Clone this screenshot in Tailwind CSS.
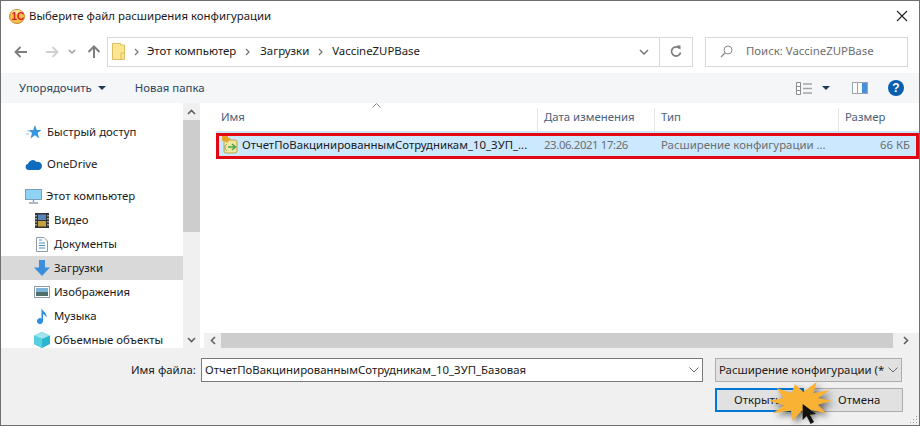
<!DOCTYPE html>
<html lang="ru">
<head>
<meta charset="utf-8">
<script src="https://cdn.jsdelivr.net/npm/@tailwindcss/browser@4"></script>
</head>
<body class="m-0 bg-white">
<div class="relative w-[920px] h-[426px] overflow-hidden flex flex-col border border-[#6f6f6f] bg-white text-[11.4px] text-[#1a1a1a] font-['Noto_Sans',sans-serif] leading-4">

  <!-- title bar -->
  <div class="h-[30px] shrink-0 flex items-center pl-[8px] pr-[11px]">
    <svg width="16" height="15" viewBox="0 0 16 15" class="shrink-0"><ellipse cx="8" cy="7.500" rx="7.500" ry="7" fill="#f5c04a" stroke="#c8862a"/><path d="M2 5A6 4 0 0 1 14 5Z" fill="#fbe3a0"/><text x="2.400" y="11.300" font-size="10" font-weight="700" fill="#d6201f" font-family="Liberation Sans">1С</text></svg>
    <span class="ml-[4px]">Выберите файл расширения конфигурации</span>
    <svg width="12" height="12" viewBox="0 0 12 12" class="ml-auto mt-[-1px]"><path d="M1 1L11 11M11 1L1 11" stroke="#222" stroke-width="1.100" fill="none"/></svg>
  </div>

  <!-- nav row -->
  <div class="h-[42px] shrink-0 flex items-center pb-[1px]">
    <div class="w-[106px] shrink-0 relative h-full flex items-center pl-[13px]">
      <svg width="14" height="12" viewBox="0 0 14 12"><path d="M13 6H2M6.500 1L1.500 6L6.500 11" stroke="#7d7d7d" stroke-width="1.800" fill="none"/></svg>
      <svg width="14" height="12" viewBox="0 0 14 12" class="ml-[17px]"><path d="M1 6H12M7.500 1L12.500 6L7.500 11" stroke="#cfcfcf" stroke-width="1.800" fill="none"/></svg>
      <svg width="8" height="6" viewBox="0 0 8 6" class="ml-[9px]"><path d="M1 1L4 4L7 1" stroke="#9a9a9a" stroke-width="1.500" fill="none"/></svg>
      <svg width="14" height="14" viewBox="0 0 14 14" class="ml-[11px]"><path d="M7 13V2M1.500 7L7 1.500L12.500 7" stroke="#7d7d7d" stroke-width="2" fill="none"/></svg>
    </div>
    <div class="w-[586px] h-[30px] shrink-0 border border-[#d9d9d9] flex items-center">
      <svg width="13" height="17" viewBox="0 0 13 17" class="ml-[4px]"><path d="M.5.5H8.500V2H12.500V16.500H.5Z" fill="#fde68f" stroke="#d9be62"/><path d="M9 16V10H12.500" stroke="#d9be62" fill="none"/></svg>
      <svg width="5" height="8" viewBox="0 0 5 8" class="ml-[9px]"><path d="M1 1L4 4L1 7" stroke="#777" stroke-width="1.300" fill="none"/></svg>
      <span class="ml-[8px] mt-[-1px]">Этот компьютер</span>
      <svg width="5" height="8" viewBox="0 0 5 8" class="ml-[9px]"><path d="M1 1L4 4L1 7" stroke="#777" stroke-width="1.300" fill="none"/></svg>
      <span class="ml-[10px] mt-[-1px]">Загрузки</span>
      <svg width="5" height="8" viewBox="0 0 5 8" class="ml-[9px]"><path d="M1 1L4 4L1 7" stroke="#777" stroke-width="1.300" fill="none"/></svg>
      <span class="ml-[9px] mt-[-1px]">VaccineZUPBase</span>
      <svg width="10" height="6" viewBox="0 0 10 6" class="ml-auto mr-[10px]"><path d="M1 1L5 5L9 1" stroke="#777" stroke-width="1.500" fill="none"/></svg>
      <div class="w-[33px] h-full border-l border-[#d9d9d9] flex items-center justify-center">
        <svg width="12" height="13" viewBox="0 0 12 13"><path d="M9.700 3.500A4.600 4.600 0 1 0 10.600 7.500" stroke="#7d7d7d" stroke-width="1.700" fill="none"/><path d="M6.500 .5H10.500V4.500Z" fill="#7d7d7d"/></svg>
      </div>
    </div>
    <div class="w-[203px] h-[30px] shrink-0 ml-[12px] border border-[#d9d9d9] flex items-center pl-[14px] text-[#6d6d6d]">
      <svg width="13" height="13" viewBox="0 0 13 13"><circle cx="8" cy="5" r="4" stroke="#8a8a8a" fill="none"/><path d="M5 8L1 12" stroke="#8a8a8a" stroke-width="1.200"/></svg>
      <span class="ml-[13px] mt-[-1px]">Поиск: VaccineZUPBase</span>
    </div>
  </div>

  <!-- toolbar -->
  <div class="h-[30px] shrink-0 bg-[#f5f6f7] flex items-center text-[#2f4560] pl-[18px]">
    <span>Упорядочить</span>
    <svg width="8" height="4" viewBox="0 0 8 4" class="ml-[6px]"><path d="M0 0H8L4 4Z" fill="#1e395b"/></svg>
    <span class="ml-[29px]">Новая папка</span>
    <svg width="17" height="13" viewBox="0 0 17 13" class="ml-auto"><path d="M.5.5H4.500V12.500H.5ZM.5 4.500H4.500M.5 8.500H4.500" stroke="#8a8a8a" fill="#fff"/><path d="M7 2H16M7 6.500H16M7 11H16" stroke="#a5a5a5" stroke-width="1.300"/></svg>
    <svg width="8" height="4" viewBox="0 0 8 4" class="ml-[9px]"><path d="M0 0H8L4 4Z" fill="#1e395b"/></svg>
    <svg width="16" height="12" viewBox="0 0 16 12" class="ml-[22px]"><rect x=".5" y=".5" width="15" height="11" fill="#fff" stroke="#9aa5b1"/><rect x="10" y="1" width="5" height="10" fill="#4a90d9"/><path d="M5.500 1V11" stroke="#9aa5b1"/></svg>
    <div class="ml-[20px] mr-[15px] w-[16px] h-[16px] rounded-full bg-[#0a5eb0] text-white text-[12px] font-bold flex items-center justify-center font-['Liberation_Sans',sans-serif]">?</div>
  </div>

  <!-- main -->
  <div class="h-[245px] shrink-0 flex">
    <!-- sidebar -->
    <div class="w-[182px] shrink-0 pt-[17px] overflow-hidden">
      <div class="h-6 flex items-center pl-[25px]">
        <svg width="16" height="16" viewBox="0 0 16 16"><path d="M9 1L10.800 6H15.500L11.700 9L13.200 14.500L9 11.300L4.500 14.500L6 9L2.500 6H7.200Z" fill="#3a96dd"/><path d="M1 7H4M0 10H3" stroke="#8fc3ee"/></svg>
        <span class="ml-[5px]">Быстрый доступ</span>
      </div>
      <div class="h-6 mt-2 flex items-center pl-[24px]">
        <svg width="17" height="11" viewBox="0 0 17 11"><path d="M3.500 11A3.200 3.200 0 0 1 3 4.700 4.800 4.800 0 0 1 11.500 3 3.600 3.600 0 0 1 14 11Z" fill="#0f6cbd"/></svg>
        <span class="ml-[5px]">OneDrive</span>
      </div>
      <div class="h-6 mt-2 flex items-center pl-[24px]">
        <svg width="17" height="15" viewBox="0 0 17 15"><rect x=".5" y=".5" width="16" height="10" fill="#8fd3f4" stroke="#7f9db3"/><path d="M8.500 11V13M4 14H13" stroke="#90a4b4" stroke-width="1.500"/></svg>
        <span class="ml-[4px]">Этот компьютер</span>
      </div>
      <div class="h-6 flex items-center pl-[34px]">
        <svg width="14" height="15" viewBox="0 0 14 15"><rect width="14" height="15" fill="#333"/><rect x="3" y="1.500" width="8" height="5.500" fill="#5a83b8"/><rect x="3" y="8" width="8" height="5.500" fill="#c2a13f"/><path d="M1 2V13M13 2V13" stroke="#ddd" stroke-dasharray="1.500 1.500" stroke-width="1.200"/></svg>
        <span class="ml-[5px]">Видео</span>
      </div>
      <div class="h-6 flex items-center pl-[35px]">
        <svg width="12" height="15" viewBox="0 0 12 15"><path d="M.5.5H8L11.500 4V14.500H.5Z" fill="#fff" stroke="#8f9aa5"/><path d="M3 6H9M3 8.500H9M3 11H9M3 3H6" stroke="#4a90c4"/></svg>
        <span class="ml-[6px]">Документы</span>
      </div>
      <div class="h-6 flex items-center pl-[33px] bg-[#d9d9d9]">
        <svg width="16" height="16" viewBox="0 0 16 16"><path d="M5 0H11V7.500H16L8 16L0 7.500H5Z" fill="#3a8fdc"/></svg>
        <span class="ml-[4px]">Загрузки</span>
      </div>
      <div class="h-6 flex items-center pl-[33px]">
        <svg width="16" height="12" viewBox="0 0 16 12"><rect x=".5" y=".5" width="15" height="11" fill="#fff" stroke="#8f9aa5"/><rect x="2" y="2" width="12" height="4" fill="#7fb3d5"/><rect x="2" y="6" width="12" height="4" fill="#4f6f6a"/></svg>
        <span class="ml-[4px]">Изображения</span>
      </div>
      <div class="h-6 flex items-center pl-[36px]">
        <svg width="11" height="16" viewBox="0 0 11 16"><path d="M4.500 0C5 3 10.500 5 9.500 9.500C9 7.500 7 6.500 6 6.200V13A3 3 0 1 1 4.500 10.500Z" fill="#2d8fdd"/></svg>
        <span class="ml-[6px]">Музыка</span>
      </div>
      <div class="h-6 flex items-center pl-[33px]">
        <svg width="16" height="16" viewBox="0 0 16 16"><path d="M8 0L16 3.500V12L8 16L0 12V3.500Z" fill="#27b5cf"/><path d="M8 7L16 3.500L8 0L0 3.500Z" fill="#9fe4ec"/><path d="M8 7V16L0 12V3.500Z" fill="#57cfdf"/></svg>
        <span class="ml-[4px]">Объемные объекты</span>
      </div>
    </div>
    <!-- sidebar scrollbar -->
    <div class="w-[17px] shrink-0 bg-[#f0f0f0] flex flex-col items-center">
      <div class="h-[17px] w-full flex items-center justify-center"><svg width="9" height="6" viewBox="0 0 9 6"><path d="M1 5L4.500 1.500L8 5" stroke="#606060" stroke-width="1.600" fill="none"/></svg></div>
      <div class="h-[112px] w-full bg-[#cdcdcd]"></div>
      <div class="mt-auto h-[17px] w-full flex items-center justify-center"><svg width="9" height="6" viewBox="0 0 9 6"><path d="M1 1L4.500 4.500L8 1" stroke="#606060" stroke-width="1.600" fill="none"/></svg></div>
    </div>
    <div class="w-[4px] shrink-0"></div>
    <!-- list -->
    <div class="flex-1 min-w-0 flex flex-col">
      <div class="relative h-[28px] shrink-0 flex text-[#4c607a] pt-[5px]">
        <svg width="9" height="5" viewBox="0 0 9 5" class="absolute left-[168px] top-0"><path d="M.5 4.500L4.500 .5L8.500 4.500" stroke="#8a8a8a" fill="none"/></svg>
        <div class="w-[334px] pl-[17px] pt-[1px] h-[24px] border-r border-[#e5e5e5]">Имя</div>
        <div class="w-[117px] pl-[6px] pt-[1px] h-[24px] border-r border-[#e5e5e5]">Дата изменения</div>
        <div class="w-[184px] pl-[6px] pt-[1px] h-[24px] border-r border-[#e5e5e5]">Тип</div>
        <div class="pl-[6px] pt-[1px]">Размер</div>
      </div>
      <div class="h-[26px] shrink-0 flex items-center bg-[#cce8ff] text-[#6d6d6d] ml-[12px] pt-[1px]">
        <div class="w-[322px] shrink-0 flex items-center pl-[5px] text-[#1a1a1a]">
          <svg width="17" height="18" viewBox="0 0 17 18" class="shrink-0"><rect x="3" y="4" width="13" height="13" rx="2" fill="#f3e79b" stroke="#b5a54a"/><path d="M1 0H7V2H10L6 7L4 5H1Z" fill="#e8a32c"/><path d="M7 11H14M11 8L14.500 11L11 14" stroke="#4aa653" stroke-width="1.600" fill="none"/><path d="M6 8A4 4 0 0 0 6 15" stroke="#8aa0a0" fill="none"/></svg>
          <span class="ml-[4px] whitespace-nowrap">ОтчетПоВакцинированнымСотрудникам_10_ЗУП_...</span>
        </div>
        <div class="w-[117px] shrink-0 pl-[6px] tracking-[-0.4px]">23.06.2021 17:26</div>
        <div class="w-[184px] shrink-0 pl-[6px] whitespace-nowrap">Расширение конфигурации ...</div>
        <div class="flex-1 text-right pr-[9px]">66 КБ</div>
      </div>
      <div class="flex-1"></div>
      <!-- horizontal scrollbar -->
      <div class="h-[15px] shrink-0 bg-[#f0f0f0] flex items-center">
        <div class="w-[17px] flex justify-center"><svg width="6" height="9" viewBox="0 0 6 9"><path d="M5 1L1.500 4.500L5 8" stroke="#606060" stroke-width="1.600" fill="none"/></svg></div>
        <div class="w-[672px] h-full bg-[#cdcdcd]"></div>
        <div class="flex-1 flex justify-center"><svg width="6" height="9" viewBox="0 0 6 9"><path d="M1 1L4.500 4.500L1 8" stroke="#606060" stroke-width="1.600" fill="none"/></svg></div>
      </div>
    </div>
  </div>

  <!-- footer -->
  <div class="flex-1 bg-[#f0f0f0] pt-[10px] pl-[130px] pr-[17px]">
    <div class="flex items-center h-[24px]">
      <span class="w-[70px] shrink-0">Имя файла:</span>
      <div class="w-[502px] h-[24px] shrink-0 bg-white border border-[#7a7a7a] flex items-center pl-[3px]">
        <span class="whitespace-nowrap">ОтчетПоВакцинированнымСотрудникам_10_ЗУП_Базовая</span>
        <svg width="10" height="6" viewBox="0 0 10 6" class="ml-auto mr-[3px]"><path d="M.5 .5L5 5L9.500 .5" stroke="#666" fill="none"/></svg>
      </div>
      <div class="w-[187px] h-[24px] shrink-0 ml-[12px] bg-[#e1e1e1] border border-[#adadad] flex items-center pl-[3px]">
        <span class="whitespace-nowrap w-[168px]">Расширение конфигурации (*</span>
        <svg width="10" height="6" viewBox="0 0 10 6" class="ml-[1px] shrink-0"><path d="M.5 .5L5 5L9.500 .5" stroke="#666" fill="none"/></svg>
      </div>
    </div>
    <div class="flex mt-[6px] pl-[584px] h-[24px]">
      <div class="w-[89px] h-[24px] shrink-0 bg-[#e1e1e1] border-2 border-[#0078d7] flex items-center pl-[17px]">Открыть</div>
      <div class="w-[92px] h-[24px] shrink-0 ml-[7px] bg-[#e1e1e1] border border-[#adadad] flex items-center pl-[26px]">Отмена</div>
    </div>
  </div>

  <!-- red highlight -->
  <div class="absolute left-[215px] top-[132px] w-[703px] h-[26px] border-[3px] border-[#e30613]"></div>

  <!-- star & cursor callout -->
  <svg class="absolute left-[679px] top-[329px] drop-shadow-[3px_3px_3px_rgba(0,0,0,0.55)]" width="240" height="96" viewBox="0 0 720 288">
    <path d="M345 162L370 186L410 156L400 190L450 180L414 204L456 212L414 224L438 250L395 240L392 266L365 242L338 272L333 242L278 250L312 226L266 212L310 204L290 174L335 190Z" fill="#f9b233"/>
  </svg>
  <svg class="absolute left-[679px] top-[329px]" width="240" height="96" viewBox="0 0 720 288">
    <path d="M368 222V270L380 258L392 282L402 276L390 254L408 252Z" fill="#111"/>
  </svg>

  <!-- resize grip -->
  <svg class="absolute right-[1px] bottom-[1px]" width="9" height="9" viewBox="0 0 9 9"><path d="M7 1h1v1H7zM4 4h1v1H4zM7 4h1v1H7zM1 7h1v1H1zM4 7h1v1H4zM7 7h1v1H7z" fill="#a0a0a0"/></svg>
</div>
</body>
</html>
